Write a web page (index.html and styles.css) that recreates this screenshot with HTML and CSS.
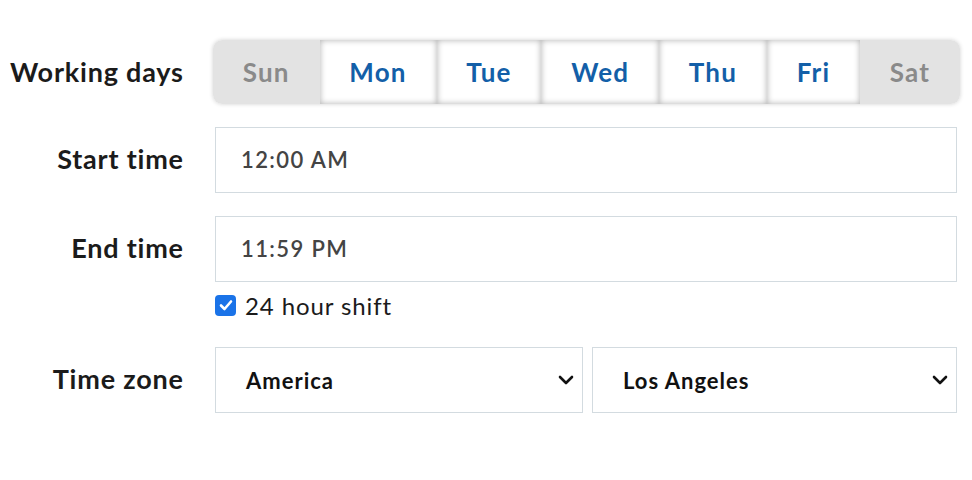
FILE: index.html
```html
<!DOCTYPE html>
<html>
<head>
<meta charset="utf-8">
<link rel="stylesheet" href="styles.css">
</head>
<body>
<div class="form">
  <div class="label row1">Working days</div>
  <div class="days">
    <div class="day off first">Sun</div>
    <div class="day on">Mon</div>
    <div class="day on">Tue</div>
    <div class="day on">Wed</div>
    <div class="day on">Thu</div>
    <div class="day on">Fri</div>
    <div class="day off last">Sat</div>
  </div>

  <div class="label">Start time</div>
  <div class="field">12:00 AM</div>

  <div class="label">End time</div>
  <div class="field-group">
    <div class="field">11:59 PM</div>
    <label class="check">
      <span class="box"><svg width="14" height="12" viewBox="0 0 14 12"><path d="M2 6.5 L5.5 10 L12 2.5" fill="none" stroke="#fff" stroke-width="2.6" stroke-linecap="round" stroke-linejoin="round"/></svg></span>
      <span>24 hour shift</span>
    </label>
  </div>

  <div class="label tz">Time zone</div>
  <div class="selects">
    <div class="select sel-a"><span>America</span><svg width="16" height="10" viewBox="0 0 16 10"><path d="M2 2 L8 8 L14 2" fill="none" stroke="#111" stroke-width="2.6" stroke-linecap="round" stroke-linejoin="round"/></svg></div>
    <div class="select sel-b"><span>Los Angeles</span><svg width="16" height="10" viewBox="0 0 16 10"><path d="M2 2 L8 8 L14 2" fill="none" stroke="#111" stroke-width="2.6" stroke-linecap="round" stroke-linejoin="round"/></svg></div>
  </div>
</div>
</body>
</html>
```

FILE: styles.css
```css
html, body {
  margin: 0;
  padding: 0;
  background: #fff;
}
body {
  font-family: Lato, "Open Sans", sans-serif;
}
.form {
  display: grid;
  grid-template-columns: 183px 742px;
  column-gap: 32px;
  row-gap: 23px;
  padding-top: 40px;
  align-items: start;
}
.label {
  text-align: right;
  font-size: 27px;
  font-weight: 700;
  letter-spacing: 0.8px;
  margin-right: -0.8px;
  color: #1b1b1b;
  height: 66px;
  line-height: 64px;
}
.row1 {
  height: 64px;
}
.tz {
  margin-top: 7px;
}
.days {
  display: flex;
  height: 64px;
  margin-left: -2px;
  margin-right: -3px;
  border-radius: 9px;
  box-shadow: 0 0 4px rgba(0,0,0,0.18);
}
.day {
  padding: 0 28px;
  font-size: 26px;
  font-weight: 700;
  letter-spacing: 1.2px;
  line-height: 64px;
  flex: 1 1 auto;
  text-align: center;
}
.day.off {
  background: #e3e3e3;
  color: #8a8a8a;
}
.day.on {
  background: #fff;
  color: #135fa8;
  box-shadow: inset 0 0 6px rgba(0,0,0,0.32);
}
.day.first {
  border-radius: 9px 0 0 9px;
}
.day.last {
  border-radius: 0 9px 9px 0;
}
.field {
  box-sizing: border-box;
  height: 66px;
  border: 1.5px solid #d3dbe0;
  padding-left: 25px;
  font-size: 22px;
  font-weight: 600;
  letter-spacing: 1.4px;
  color: #444;
  line-height: 63px;
}
.field-group {
  display: flex;
  flex-direction: column;
}
.check {
  display: flex;
  align-items: center;
  gap: 9px;
  margin-top: 11px;
  font-size: 24px;
  letter-spacing: 0.9px;
  color: #1b1b1b;
  height: 24px;
}
.box {
  width: 21px;
  height: 21px;
  border-radius: 4px;
  background: #1a73e8;
  display: flex;
  align-items: center;
  justify-content: center;
}
.selects {
  display: flex;
  gap: 9px;
  margin-top: 7px;
}
.select {
  box-sizing: border-box;
  height: 66px;
  border: 1.5px solid #d3dbe0;
  display: flex;
  align-items: center;
  justify-content: space-between;
  padding: 0 8px 0 30px;
  font-size: 22px;
  font-weight: 700;
  letter-spacing: 1px;
  color: #111;
}
.sel-a {
  width: 368px;
}
.sel-b {
  width: 365px;
}
```
